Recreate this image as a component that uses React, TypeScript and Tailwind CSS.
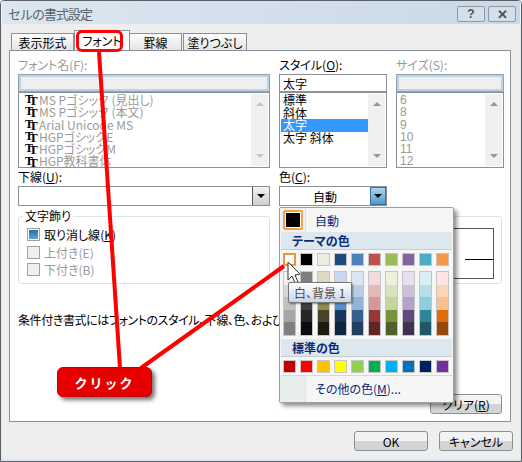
import React from "react";

const theme = ["#ffffff","#000000","#EEECE1","#1F497D","#4F81BD","#C0504D","#9BBB59","#8064A2","#4BACC6","#F79646"];
const shades = [
  ["#F2F2F2","#D9D9D9","#BFBFBF","#A6A6A6","#808080"],
  ["#7F7F7F","#595959","#3F3F3F","#262626","#0C0C0C"],
  ["#DDD9C3","#C4BD97","#938953","#494429","#1D1B10"],
  ["#C6D9F0","#8DB3E2","#548DD4","#17365D","#0F243E"],
  ["#DBE5F1","#B8CCE4","#95B3D7","#366092","#244061"],
  ["#F2DCDB","#E5B9B7","#D99694","#953734","#632423"],
  ["#EBF1DD","#D7E3BC","#C3D69B","#76923C","#4F6128"],
  ["#E5E0EC","#CCC1D9","#B2A2C7","#5F497A","#3F3151"],
  ["#DBEEF3","#B7DDE8","#92CDDC","#31859B","#205867"],
  ["#FFE4E4","#FBD5B5","#FAC08F","#E36C09","#974806"],
];
const standard = ["#C00000","#FF0000","#FFC000","#FFFF00","#92D050","#00B050","#00B0F0","#0070C0","#002060","#7030A0"];
const fonts = ["MS Pゴシック (見出し)","MS Pゴシック (本文)","Arial Unicode MS","HGPゴシックE","HGPゴシックM","HGP教科書体"];

function ScrollBar({ dim }: { dim?: boolean }) {
  const c = dim ? "border-b-[#c4c4c4]" : "border-b-[#8f98a0]";
  const d = dim ? "border-t-[#c4c4c4]" : "border-t-[#8f98a0]";
  return (
    <div className="w-[17px] bg-[#f0f0f0] flex flex-col justify-between items-center py-[8px] mr-[1px] my-[1px]">
      <div className={`w-0 h-0 border-x-[4px] border-x-transparent border-b-[4px] ${c}`} />
      <div className={`w-0 h-0 border-x-[4px] border-x-transparent border-t-[4px] ${d}`} />
    </div>
  );
}

function TT() {
  return (
    <span className="relative inline-block w-[17px] h-[12px] shrink-0">
      <span className="absolute left-[3px] top-[-1px] text-[12px] leading-[12px] font-bold text-black font-['Liberation_Serif',serif]">T</span>
      <span className="absolute left-[7px] top-[1px] text-[13px] leading-[12px] font-bold text-black font-['Liberation_Serif',serif]">T</span>
    </span>
  );
}

function Swatch({ color, active }: { color: string; active?: boolean }) {
  return (
    <div className={`w-[13px] h-[13px] ${active ? "border-2 border-[#f29536]" : "border border-[#c5c5c5]"}`} style={{ backgroundColor: color }} />
  );
}

function Check({ checked, dim, label, u }: { checked?: boolean; dim?: boolean; label: string; u: string }) {
  return (
    <div className={`flex items-center gap-[4px] h-[17.5px] ${dim ? "text-[#9a9a9a]" : "text-black"}`}>
      <div className={`w-[13px] h-[13px] border border-[#9aa2aa] flex items-center justify-center ${dim ? "bg-[#f0f0f0]" : "bg-white"}`}>
        {checked && <div className="w-[9px] h-[9px] bg-gradient-to-b from-[#2b6ea8] to-[#59a6cf]" />}
      </div>
      <span>
        {label}(<span className={dim ? "" : "underline"}>{u}</span>)
      </span>
    </div>
  );
}

function Button({ children, className }: { children: React.ReactNode; className?: string }) {
  return (
    <div className={`h-[20px] border border-[#8a8f96] rounded-[3px] flex items-center justify-center bg-gradient-to-b from-[#f3f3f3] from-50% to-[#d4d4d4] to-50% text-black ${className ?? ""}`}>
      {children}
    </div>
  );
}

export default function App() {
  return (
    <div className="relative w-[522px] h-[462px] overflow-hidden bg-[#eeeeee] border border-[#5b6066] rounded-t-[4px] flex flex-col text-[12px] leading-[13px] text-black [font-feature-settings:'palt'] font-['Noto_Sans_CJK_JP','Liberation_Sans',sans-serif]">
      {/* Title bar */}
      <div className="h-[23px] shrink-0 flex items-center justify-between pl-[6px] pr-[4px] bg-gradient-to-r from-[#dbe6ef] via-[#d3e0ec] to-[#c9d9e8] border-x border-[#eef3f8]">
        <span className="text-[13px] text-[#5c6268] mt-[2px] [font-feature-settings:normal] tracking-[-1px]">セルの書式設定</span>
        <div className="flex gap-[3px] mt-[3px]">
          <div className="w-[28px] h-[16px] border border-[#8c9aa6] rounded-[2px] flex items-center justify-center text-[12px] font-bold text-[#4c5258] bg-[#d3dfe9] font-['Liberation_Sans',sans-serif]">?</div>
          <div className="w-[28px] h-[16px] border border-[#8c9aa6] rounded-[2px] flex items-center justify-center text-[13px] font-bold text-[#4c5258] bg-[#d3dfe9] font-['Liberation_Sans',sans-serif]">✕</div>
        </div>
      </div>

      {/* Body */}
      <div className="flex-1 flex flex-col pl-[7px] pr-[7px] border-x border-b-2 border-[#dfe7ef] bg-[#eeeeee]">
        {/* Tabs */}
        <div className="h-[26px] shrink-0 flex items-end pl-[2px]">
          <div className="w-[63px] h-[17px] border border-b-0 border-[#8c9096] bg-gradient-to-b from-[#fdfdfd] to-[#e4e4e4] flex items-center justify-center">表示形式</div>
          <div className="w-[56px] h-[20px] border border-b-0 border-[#8c9096] bg-white flex items-center justify-center relative z-10">フォント</div>
          <div className="w-[52px] h-[17px] border border-b-0 border-l-0 border-[#8c9096] bg-gradient-to-b from-[#fdfdfd] to-[#e4e4e4] flex items-center justify-center">罫線</div>
          <div className="w-[64px] h-[17px] ml-[1px] border border-b-0 border-[#8c9096] bg-gradient-to-b from-[#fdfdfd] to-[#e4e4e4] flex items-center justify-center">塗りつぶし</div>
        </div>

        {/* Panel */}
        <div className="w-[502px] h-[372px] bg-white border border-[#8c9096] pl-[8px] pt-[7px] shrink-0 flex flex-col">
          <div className="flex gap-[9px]">
            {/* Font name */}
            <div className="w-[252px] shrink-0 flex flex-col">
              <div className="h-[16px] text-[#9a9a9a]">フォント名(F):</div>
              <div className="h-[18px] border border-[#98a0a8] shadow-[inset_0_0_0_2px_#b8d4ec] bg-[#efefef]" />
              <div className="h-[76px] border border-[#8c9096] flex justify-between">
                <div className="pl-[3px] pt-[1px] flex flex-col text-[#9a9a9a]">
                  {fonts.map((f) => (
                    <div key={f} className="h-[12.3px] leading-[12.3px] flex items-center whitespace-nowrap"><TT />{f}</div>
                  ))}
                </div>
                <ScrollBar dim />
              </div>
            </div>
            {/* Style */}
            <div className="w-[108px] shrink-0 flex flex-col">
              <div className="h-[16px]">スタイル(<span className="underline">O</span>):</div>
              <div className="h-[18px] border border-[#8c9096] px-[3px] flex items-center">太字</div>
              <div className="h-[76px] border border-[#8c9096] flex justify-between">
                <div className="flex-1 pl-[1px] pt-[1px] flex flex-col">
                  {["標準","斜体","太字","太字 斜体"].map((s) => (
                    <div key={s} className={`h-[12.5px] leading-[12.5px] pl-[2px] ${s === "太字" ? "bg-[#3399ff] text-white" : ""}`}>{s}</div>
                  ))}
                </div>
                <ScrollBar />
              </div>
            </div>
            {/* Size */}
            <div className="w-[108px] shrink-0 flex flex-col">
              <div className="h-[16px] text-[#9a9a9a]">サイズ(S):</div>
              <div className="h-[18px] border border-[#98a0a8] shadow-[inset_0_0_0_2px_#b8d4ec] bg-[#efefef]" />
              <div className="h-[76px] border border-[#8c9096] flex justify-between">
                <div className="pl-[3px] pt-[1px] flex flex-col text-[#9a9a9a]">
                  {["6","8","9","10","11","12"].map((s) => (
                    <div key={s} className="h-[12.3px] leading-[12.3px] font-['Liberation_Sans',sans-serif]">{s}</div>
                  ))}
                </div>
                <ScrollBar />
              </div>
            </div>
          </div>

          {/* Underline / colour */}
          <div className="flex gap-[9px] mt-[2px]">
            <div className="w-[252px] shrink-0 flex flex-col">
              <div className="h-[16px]">下線(<span className="underline">U</span>):</div>
              <div className="h-[20px] border border-[#8c9096] flex justify-end">
                <div className="w-[17px] bg-gradient-to-b from-[#f4f4f4] to-[#cfcfcf] border-l border-[#555] flex items-center justify-center">
                  <div className="w-0 h-0 border-x-[4px] border-x-transparent border-t-[4px] border-t-black" />
                </div>
              </div>
            </div>
            <div className="w-[108px] shrink-0 flex flex-col">
              <div className="h-[16px]">色(<span className="underline">C</span>):</div>
              <div className="h-[20px] border border-[#8c9096] flex">
                <div className="flex-1 flex items-center justify-center">自動</div>
                <div className="w-[16px] bg-gradient-to-b from-[#a9d5f0] to-[#4d9ccc] border border-[#3c6f9c] flex items-center justify-center">
                  <div className="w-0 h-0 border-x-[4px] border-x-transparent border-t-[4px] border-t-black" />
                </div>
              </div>
            </div>
          </div>

          {/* Effects + preview */}
          <div className="flex gap-[9px] mt-[10px]">
            <div className="relative w-[252px] shrink-0 h-[68px] border border-[#dbe2e8] rounded-[3px] pl-[8px] pt-[9px]">
              <span className="absolute left-[4px] top-[-8px] bg-white px-[2px]">文字飾り</span>
              <Check checked label="取り消し線" u="K" />
              <Check dim label="上付き" u="E" />
              <Check dim label="下付き" u="B" />
            </div>
            <div className="w-[223px] shrink-0 h-[68px] border border-[#dbe2e8] rounded-[3px] pt-[11px]">
              <div className="ml-auto mr-[7px] w-[180px] h-[51px] border border-[#555] flex items-center justify-end">
                <div className="w-[28px] h-px bg-black mt-[12px]" />
              </div>
            </div>
          </div>

          <div className="mt-[29px] whitespace-nowrap h-[14px] tracking-[-0.4px]">条件付き書式にはフォントのスタイル、下線、色、および取り消し線を設定できます。</div>

          <div className="flex justify-end mt-[67px] w-[484px]">
            <Button className="w-[72px]">クリア(<span className="underline">R</span>)</Button>
          </div>
        </div>

        {/* Footer */}
        <div className="flex-1 flex justify-end items-start gap-[11px] pt-[9px] pr-[0px]">
          <Button className="w-[74px]">OK</Button>
          <Button className="w-[74px]">キャンセル</Button>
        </div>
      </div>

      {/* Colour dropdown */}
      <div className="absolute left-[278px] top-[206px] w-[175px] h-[196px] bg-[#f6f6f6] border border-[#9aa0a6] rounded-[2px] shadow-[3px_3px_4px_rgba(0,0,0,0.45)] flex flex-col z-20 text-[#0a2a78]">
        <div className="h-[24px] shrink-0 flex items-center">
          <div className="w-[26px] h-full flex items-center justify-center border-r border-[#dfe3e6] bg-[#eef1f2]">
            <div className="w-[20px] h-[20px] border-2 border-[#f2a33c] p-px rounded-[2px] bg-[#fff]"><div className="w-full h-full bg-black" /></div>
          </div>
          <span className="ml-[9px]">自動</span>
        </div>
        <div className="h-[18px] shrink-0 mx-px bg-[#dde7ee] flex items-center pl-[11px] font-bold border-b border-[#c5ccd2]">テーマの色</div>
        <div className="flex gap-[4px] pl-[3px] mt-[3px]">
          {theme.map((c, i) => <Swatch key={c} color={c} active={i === 0} />)}
        </div>
        <div className="flex gap-[4px] pl-[3px] mt-[5px]">
          {shades.map((col, i) => (
            <div key={i} className="w-[13px] border border-[#c5c5c5] flex flex-col">
              {col.map((c) => <div key={c} className="h-[12.6px]" style={{ backgroundColor: c }} />)}
            </div>
          ))}
        </div>
        <div className="h-[18px] shrink-0 mx-px mt-[3px] bg-[#dde7ee] flex items-center pl-[11px] font-bold border-b border-[#c5ccd2]">標準の色</div>
        <div className="flex gap-[4px] pl-[3px] mt-[3px]">
          {standard.map((c) => <Swatch key={c} color={c} />)}
        </div>
        <div className="h-px bg-[#d4d8db] mt-[2px] mx-px" />
        <div className="flex-1 flex items-center">
          <div className="w-[26px] h-full border-r border-[#dfe3e6] bg-[#e8eded]" />
          <span className="ml-[9px]">その他の色(<span className="underline">M</span>)...</span>
        </div>
      </div>

      {/* Red annotation lines */}
      <svg className="absolute left-0 top-0 z-30 pointer-events-none" width="522" height="462">
        <line x1="98" y1="51" x2="119" y2="367" stroke="#ff0000" strokeWidth="4" />
        <line x1="140" y1="367" x2="283" y2="265" stroke="#ff0000" strokeWidth="4" />
        <path d="M287 261 L287 279 L291 275 L294 282 L297 281 L294 274 L299 273 Z" fill="#ffffff" stroke="#333" strokeWidth="1" />
      </svg>

      {/* Tab highlight */}
      <div className="absolute left-[75px] top-[29px] w-[47px] h-[22px] border-[3px] border-[#ff0000] rounded-[6px] z-30" />

      {/* Tooltip */}
      <div className="absolute left-[287px] top-[281px] w-[64px] h-[21px] border border-[#767676] rounded-[2px] bg-gradient-to-b from-[#ffffff] to-[#c9d6e6] flex items-center pl-[5px] text-[#4c4c4c] whitespace-nowrap z-40 shadow-[1px_1px_2px_rgba(0,0,0,0.4)]">白、背景 1</div>

      {/* Callout */}
      <div className="absolute left-[56px] top-[366px] w-[95px] h-[30px] bg-[#e60000] rounded-[6px] border border-[#c00000] shadow-[3px_3px_4px_rgba(0,0,0,0.55)] flex items-center justify-center text-white font-bold text-[13px] tracking-[2px] [font-feature-settings:normal] z-30">クリック</div>
    </div>
  );
}
